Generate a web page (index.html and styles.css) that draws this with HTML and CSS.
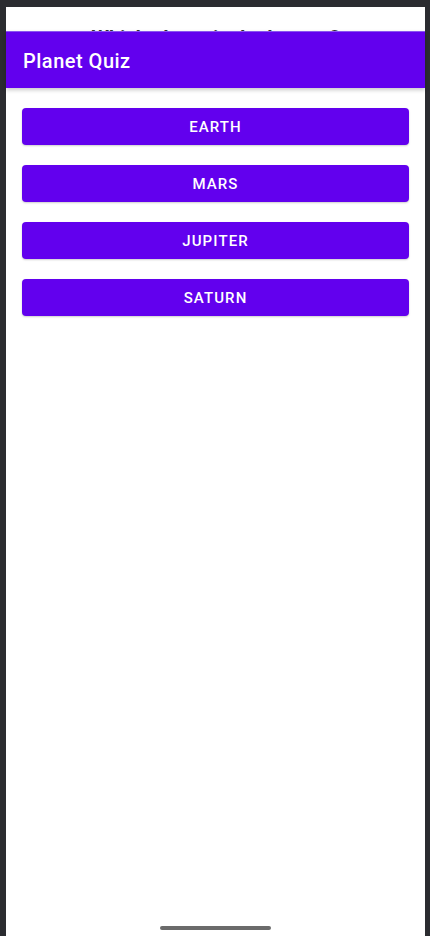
FILE: index.html
```html
<!DOCTYPE html>
<html>
<head>
<meta charset="utf-8">
<link rel="stylesheet" href="styles.css">
</head>
<body>
<div class="screen">
  <div class="content">
    <h1 class="question">Which planet is the largest?</h1>
    <div class="options">
      <button class="option">EARTH</button>
      <button class="option">MARS</button>
      <button class="option">JUPITER</button>
      <button class="option">SATURN</button>
    </div>
  </div>
  <header class="appbar">
    <span class="title">Planet Quiz</span>
  </header>
  <div class="home-indicator"></div>
</div>
</body>
</html>
```
FILE: styles.css
```css
html, body {
  margin: 0;
  padding: 0;
}
body {
  background: #2b2c30;
  padding: 7px 5px 0 6px;
  font-family: Roboto, "Noto Sans", sans-serif;
  height: 936px;
  box-sizing: border-box;
  overflow: hidden;
}
.screen {
  position: relative;
  background: #ffffff;
  height: 929px;
  display: flex;
  flex-direction: column;
}
.content {
  flex: 1;
  display: flex;
  flex-direction: column;
}
.question {
  margin: 19px 0 0 0;
  font-size: 20px;
  line-height: 24px;
  font-weight: 700;
  color: #333333;
  text-align: center;
}
.options {
  display: flex;
  flex-direction: column;
  gap: 20px;
  padding: 0 16px;
  margin-top: 58px;
}
.option {
  height: 37px;
  border: none;
  border-radius: 4px;
  background: #6200ee;
  color: #ffffff;
  font-family: Roboto, "Noto Sans", sans-serif;
  font-size: 15px;
  font-weight: 500;
  letter-spacing: 1.1px;
  box-shadow: 0 1px 2px rgba(0,0,0,0.2);
  padding: 0;
}
.appbar {
  position: absolute;
  top: 24px;
  left: 0;
  right: 0;
  height: 57px;
  background: #6200ee;
  border-top: 1px solid #8a55f0;
  box-sizing: border-box;
  display: flex;
  align-items: center;
  padding-left: 17px;
  box-shadow: 0 2px 4px rgba(0,0,0,0.22);
}
.title {
  color: #ffffff;
  font-size: 20px;
  font-weight: 500;
  letter-spacing: 0.5px;
  padding-top: 2px;
}
.home-indicator {
  position: absolute;
  left: 154px;
  width: 111px;
  bottom: 6px;
  height: 4px;
  border-radius: 2px;
  background: #6b6b6b;
}
```
